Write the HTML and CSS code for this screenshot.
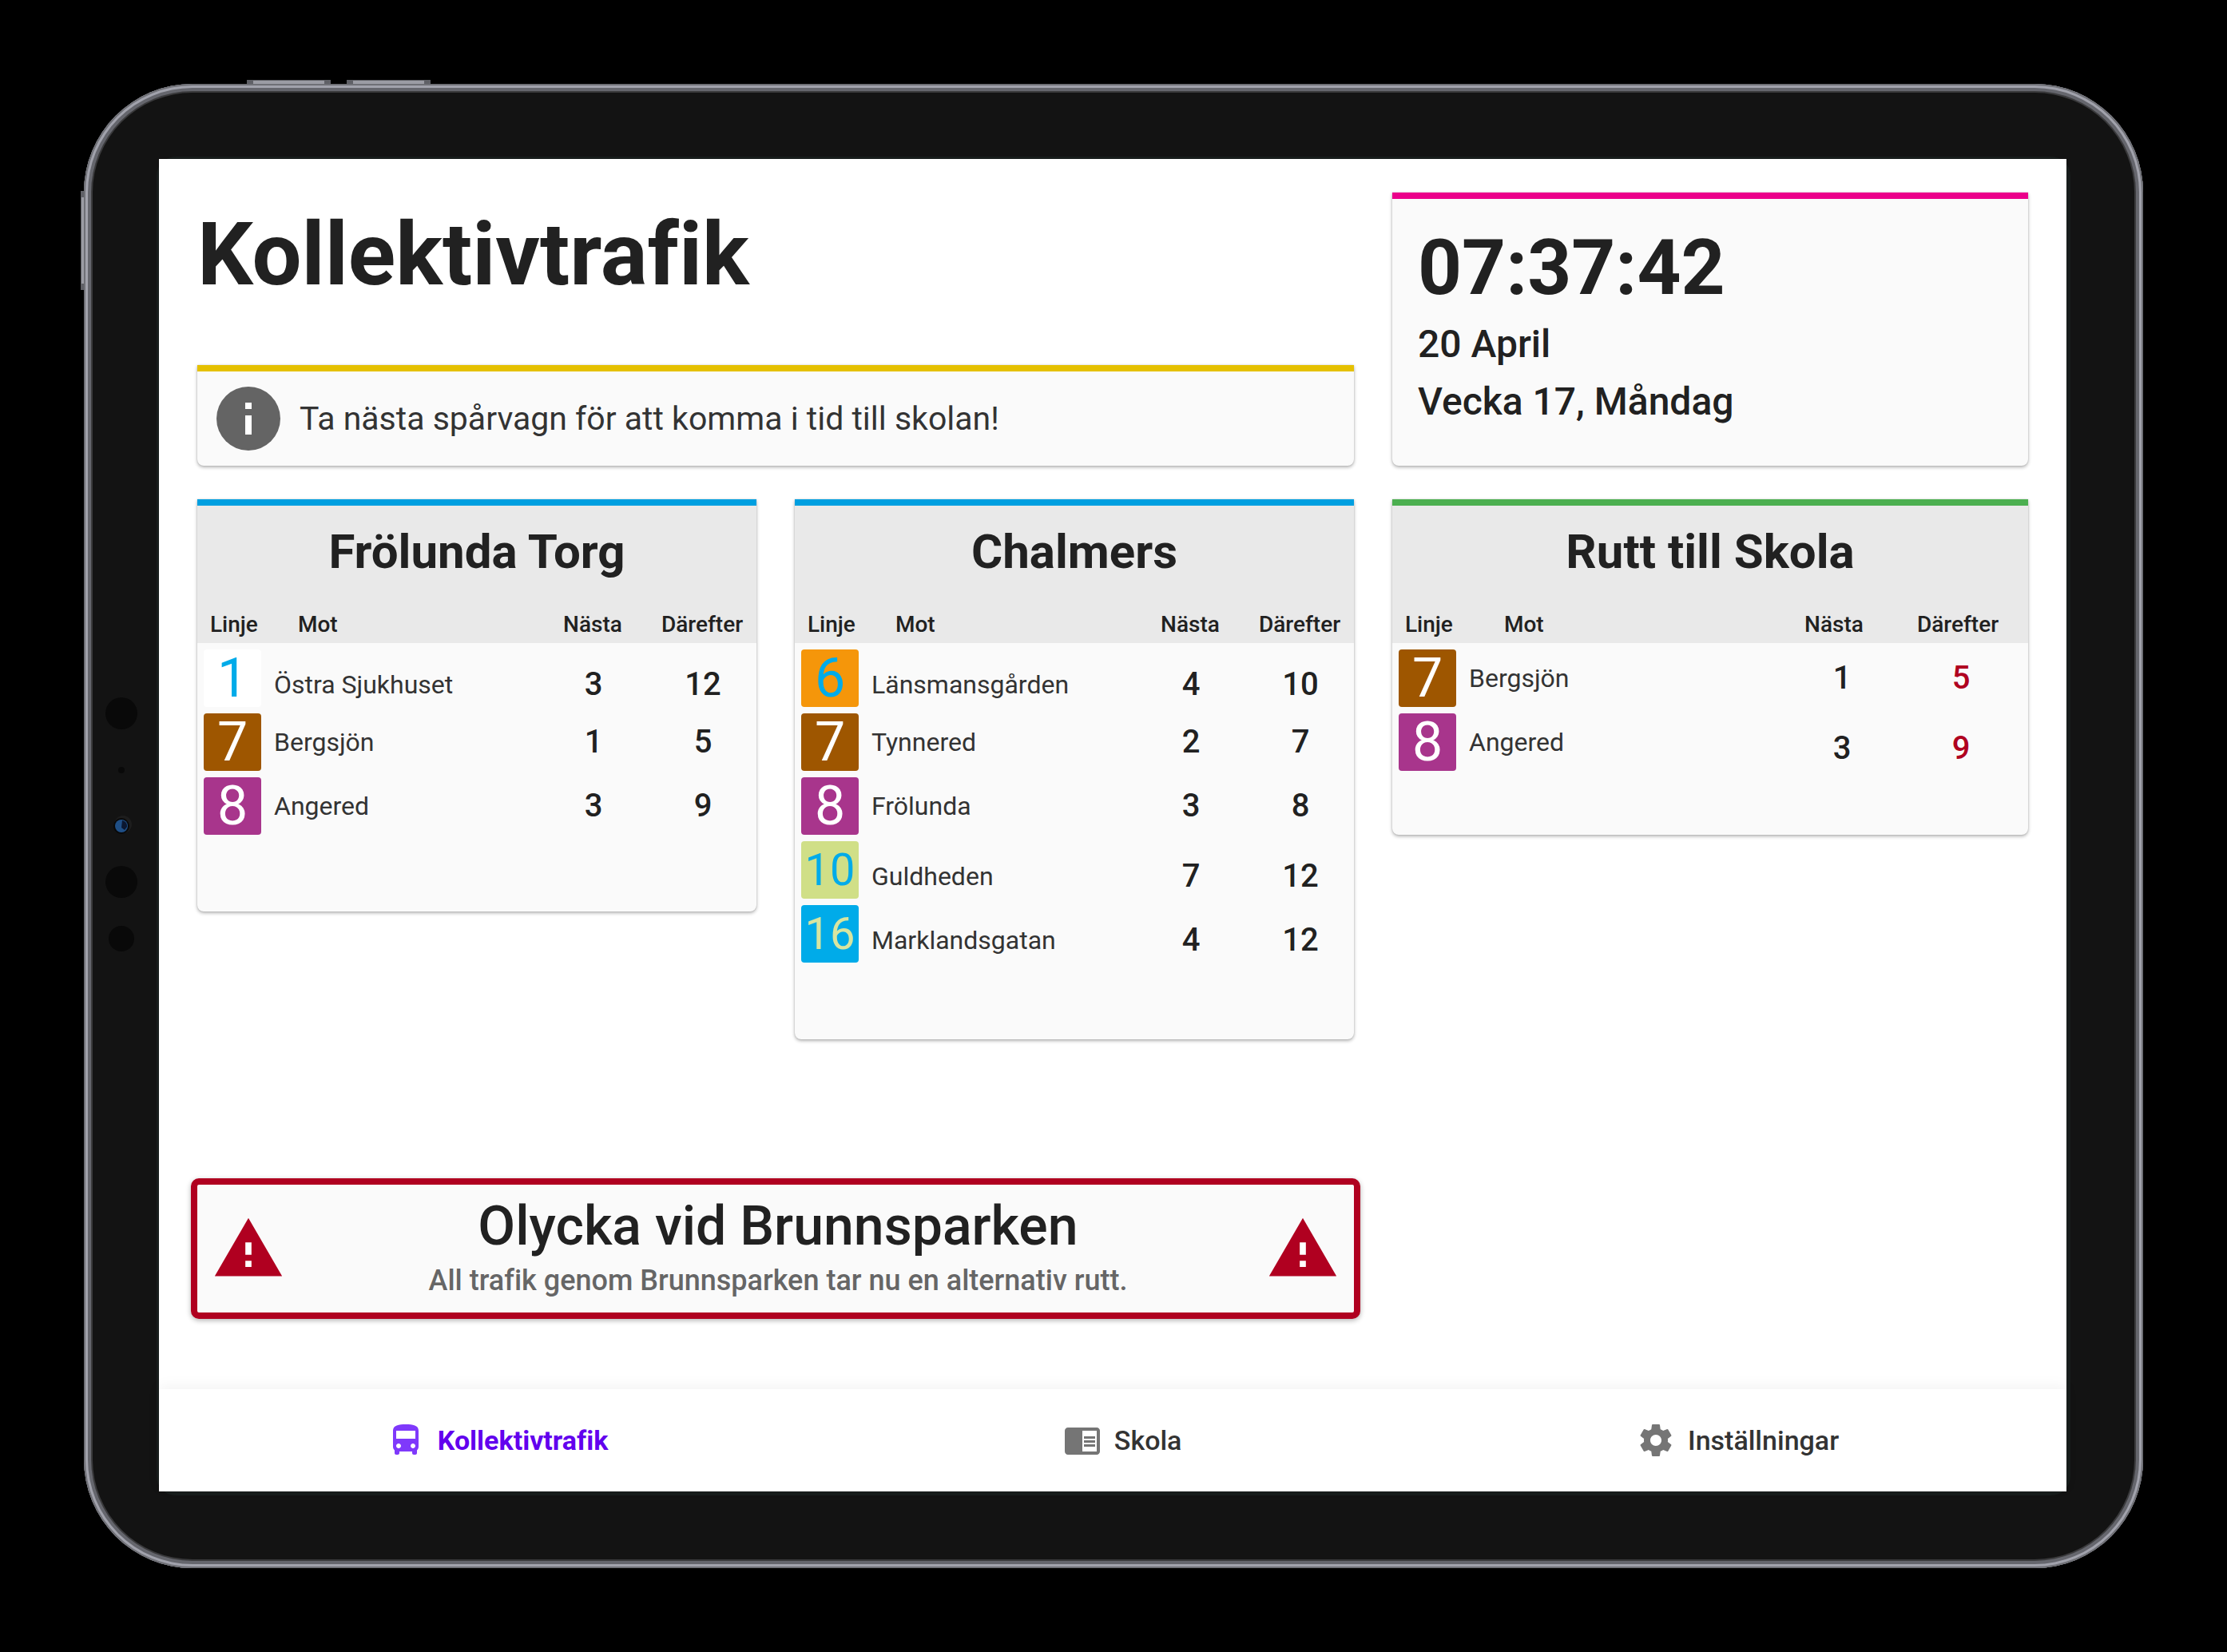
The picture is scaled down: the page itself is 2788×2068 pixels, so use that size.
FILE: index.html
```html
<!DOCTYPE html>
<html lang="sv">
<head>
<meta charset="utf-8">
<meta name="viewport" content="width=device-width, initial-scale=1">
<title>Kollektivtrafik</title>
<link rel="stylesheet" href="styles.css">
</head>
<body>
<div class="device">
  <span class="key key-top-first"></span>
  <span class="key key-top-second"></span>
  <span class="key key-side"></span>
  <svg class="sensors" viewBox="0 0 48 330" aria-hidden="true">
    <circle cx="24" cy="24" r="20" fill="#090909"/>
    <circle cx="24" cy="95" r="4" fill="#090909"/>
    <circle cx="26" cy="163" r="11" fill="#1d1d1d"/>
    <circle cx="24" cy="165" r="10" fill="#090909"/>
    <circle cx="24" cy="165" r="8" fill="#1f4f86"/>
    <path d="M25 158a7 7 0 0 1 6 8l-3 4-4-3z" fill="#0b1730"/>
    <circle cx="24" cy="235" r="20" fill="#090909"/>
    <circle cx="24" cy="306" r="16" fill="#090909"/>
  </svg>
  <div class="glass">
    <div class="screen">
      <main class="content">
        <div class="grid">
          <header class="intro">
            <h1 class="page-title">Kollektivtrafik</h1>
            <section class="card card-yellow info">
              <svg class="info-icon" viewBox="0 0 24 24" aria-hidden="true"><circle cx="12" cy="12" r="10" fill="#646464"/><path fill="#fff" d="M11 11h2v6h-2zM11 7h2v2h-2z"/></svg>
              <p class="info-text">Ta nästa spårvagn för att komma i tid till skolan!</p>
            </section>
          </header>
          <section class="card card-pink clock">
            <time class="clock-time">07:37:42</time>
            <p class="clock-date">20 April</p>
            <p class="clock-date">Vecka 17, Måndag</p>
          </section>

          <section class="card card-blue">
            <h2 class="card-title">Frölunda Torg</h2>
            <table class="lines">
              <colgroup><col class="col-line"><col><col class="col-next"><col class="col-after"></colgroup>
              <thead><tr><th class="head-line">Linje</th><th class="head-to">Mot</th><th>Nästa</th><th>Därefter</th></tr></thead>
              <tbody>
                <tr><td class="cell-badge"><span class="badge line-1">1</span></td><td class="name low">Östra Sjukhuset</td><td class="time low">3</td><td class="time low">12</td></tr>
                <tr><td class="cell-badge"><span class="badge line-7">7</span></td><td class="name">Bergsjön</td><td class="time">1</td><td class="time">5</td></tr>
                <tr><td class="cell-badge"><span class="badge line-8">8</span></td><td class="name">Angered</td><td class="time">3</td><td class="time">9</td></tr>
              </tbody>
            </table>
          </section>

          <section class="card card-blue">
            <h2 class="card-title">Chalmers</h2>
            <table class="lines">
              <colgroup><col class="col-line"><col><col class="col-next"><col class="col-after"></colgroup>
              <thead><tr><th class="head-line">Linje</th><th class="head-to">Mot</th><th>Nästa</th><th>Därefter</th></tr></thead>
              <tbody>
                <tr><td class="cell-badge"><span class="badge line-6">6</span></td><td class="name low">Länsmansgården</td><td class="time low">4</td><td class="time low">10</td></tr>
                <tr><td class="cell-badge"><span class="badge line-7">7</span></td><td class="name">Tynnered</td><td class="time">2</td><td class="time">7</td></tr>
                <tr><td class="cell-badge"><span class="badge line-8">8</span></td><td class="name">Frölunda</td><td class="time">3</td><td class="time">8</td></tr>
                <tr><td class="cell-badge"><span class="badge line-10">10</span></td><td class="name low">Guldheden</td><td class="time low">7</td><td class="time low">12</td></tr>
                <tr><td class="cell-badge"><span class="badge line-16">16</span></td><td class="name low">Marklandsgatan</td><td class="time low">4</td><td class="time low">12</td></tr>
              </tbody>
            </table>
          </section>

          <section class="card card-green route">
            <h2 class="card-title">Rutt till Skola</h2>
            <table class="lines">
              <colgroup><col class="col-line"><col><col class="col-next"><col class="col-after"></colgroup>
              <thead><tr><th class="head-line">Linje</th><th class="head-to">Mot</th><th>Nästa</th><th>Därefter</th></tr></thead>
              <tbody>
                <tr><td class="cell-badge"><span class="badge line-7">7</span></td><td class="name">Bergsjön</td><td class="time">1</td><td class="time late">5</td></tr>
                <tr><td class="cell-badge"><span class="badge line-8">8</span></td><td class="name">Angered</td><td class="time low">3</td><td class="time low late">9</td></tr>
              </tbody>
            </table>
          </section>
        </div>

        <div class="grid alert-row">
          <section class="alert" role="alert">
            <svg class="alert-icon" viewBox="0 0 24 24" aria-hidden="true"><path fill="#fff" d="M10 9h4v10h-4z"/><path fill="#b00020" d="M1 21h22L12 2 1 21zm12-3h-2v-2h2v2zm0-4h-2v-4h2v4z"/></svg>
            <div class="alert-body">
              <h2 class="alert-title">Olycka vid Brunnsparken</h2>
              <p class="alert-text">All trafik genom Brunnsparken tar nu en alternativ rutt.</p>
            </div>
            <svg class="alert-icon" viewBox="0 0 24 24" aria-hidden="true"><path fill="#fff" d="M10 9h4v10h-4z"/><path fill="#b00020" d="M1 21h22L12 2 1 21zm12-3h-2v-2h2v2zm0-4h-2v-4h2v4z"/></svg>
          </section>
        </div>
      </main>

      <nav class="tabs">
        <a class="tab tab-active" href="#kollektivtrafik">
          <svg class="tab-icon" viewBox="0 0 24 24" aria-hidden="true"><path d="M4 16c0 .88.39 1.67 1 2.22V20c0 .55.45 1 1 1h1c.55 0 1-.45 1-1v-1h8v1c0 .55.45 1 1 1h1c.55 0 1-.45 1-1v-1.78c.61-.55 1-1.34 1-2.22V6c0-3.5-3.58-4-8-4s-8 .5-8 4v10zm3.5 1c-.83 0-1.5-.67-1.5-1.5S6.67 14 7.5 14s1.5.67 1.5 1.5S8.33 17 7.5 17zm9 0c-.83 0-1.5-.67-1.5-1.5s.67-1.5 1.5-1.5 1.5.67 1.5 1.5-.67 1.5-1.5 1.5zm1.5-6H6V6h12v5z"/></svg>
          Kollektivtrafik
        </a>
        <a class="tab" href="#skola">
          <svg class="tab-icon" viewBox="0 0 24 24" aria-hidden="true"><path d="M13 12h7v1.5h-7zm0-2.5h7V11h-7zm0 5h7V16h-7zM21 4H3c-1.1 0-2 .9-2 2v13c0 1.1.9 2 2 2h18c1.1 0 2-.9 2-2V6c0-1.1-.9-2-2-2zm0 15h-9V6h9v13z"/></svg>
          Skola
        </a>
        <a class="tab" href="#installningar">
          <svg class="tab-icon" viewBox="0 0 24 24" aria-hidden="true"><path d="M19.43 12.98c.04-.32.07-.64.07-.98s-.03-.66-.07-.98l2.11-1.65c.19-.15.24-.42.12-.64l-2-3.46c-.12-.22-.39-.3-.61-.22l-2.49 1c-.52-.4-1.08-.73-1.69-.98l-.38-2.65C14.46 2.18 14.25 2 14 2h-4c-.25 0-.46.18-.49.42l-.38 2.65c-.61.25-1.17.59-1.69.98l-2.49-1c-.23-.09-.49 0-.61.22l-2 3.46c-.13.22-.07.49.12.64l2.11 1.65c-.04.32-.07.65-.07.98s.03.66.07.98l-2.11 1.65c-.19.15-.24.42-.12.64l2 3.46c.12.22.39.3.61.22l2.49-1c.52.4 1.08.73 1.69.98l.38 2.65c.03.24.24.42.49.42h4c.25 0 .46-.18.49-.42l.38-2.65c.61-.25 1.17-.59 1.69-.98l2.49 1c.23.09.49 0 .61-.22l2-3.46c.12-.22.07-.49-.12-.64l-2.11-1.65zM12 15.5c-1.93 0-3.5-1.57-3.5-3.5s1.57-3.5 3.5-3.5 3.5 1.57 3.5 3.5-1.57 3.5-3.5 3.5z"/></svg>
          Inställningar
        </a>
      </nav>
    </div>
  </div>
</div>
</body>
</html>
```

FILE: styles.css
```css
* {
  box-sizing: border-box;
}

body {
  margin: 0;
  min-height: 100vh;
  padding: 105px;
  display: flex;
  background: #000;
  color: #212121;
  font-family: Roboto, "Noto Sans", sans-serif;
  font-variant-ligatures: none;
}

h1, h2, p {
  margin: 0;
}

/* Tablet frame */
.device {
  position: relative;
  flex: 1;
  display: flex;
  padding: 91px;
  border-radius: 136px;
  background: #131313;
  box-shadow:
    inset 0 0 0 2px #6f7076,
    inset 0 0 0 5px #a1a2ac,
    inset 0 0 0 9px #65666d,
    inset 0 0 0 11px #3a3a3c;
}

.key {
  position: absolute;
  background: #9b9ca4;
  border: 0 solid #5f6066;
}

.key-top-first,
.key-top-second {
  top: -5px;
  width: 105px;
  height: 5px;
  border-width: 1px 8px 0;
}

.key-top-first {
  left: 204px;
}

.key-top-second {
  left: 329px;
}

.key-side {
  left: -4px;
  top: 134px;
  width: 4px;
  height: 124px;
  border-width: 8px 0 8px 1px;
}

.sensors {
  position: absolute;
  left: 23px;
  top: 50%;
  width: 48px;
  height: 330px;
  margin-top: -165px;
}

.glass {
  flex: 1;
  display: flex;
  padding: 3px 5px 5px 3px;
  border-radius: 24px;
  background: #181d1c;
}

.screen {
  flex: 1;
  display: flex;
  flex-direction: column;
  background: #fff;
}

.content {
  flex: 1;
  display: flex;
  flex-direction: column;
  padding: 42px 48px 88px;
}

.grid {
  display: grid;
  grid-template-columns: 700fr 700fr 796fr;
  gap: 42px 48px;
  align-items: start;
}

/* Cards */
.card {
  border-top: 8px solid;
  border-radius: 0 0 8px 8px;
  background: #fafafa;
  box-shadow: 0 2px 4px rgba(0, 0, 0, .3), 0 0 2px rgba(0, 0, 0, .16);
}

.card-yellow { border-color: #e5c000; }
.card-pink { border-color: #eb008b; }
.card-blue { border-color: #009fe0; }
.card-green { border-color: #4caf50; }

.intro {
  grid-column: span 2;
  align-self: stretch;
  display: flex;
  flex-direction: column;
  justify-content: space-between;
}

.page-title {
  padding-top: 12px;
  font-size: 110px;
  line-height: 132px;
  font-weight: 700;
}

.info {
  display: flex;
  align-items: center;
  gap: 16px;
  padding: 11px 16px;
}

.info-icon {
  width: 96px;
  height: 96px;
}

.info-text {
  font-size: 41px;
  line-height: 48px;
  color: #333;
}

.clock {
  padding: 26px 32px 44px;
}

.clock-time {
  display: block;
  font-size: 96px;
  line-height: 120px;
  font-weight: 700;
}

.clock-date {
  font-size: 48px;
  line-height: 72px;
  font-weight: 500;
}

.card-title {
  padding: 22px 0 32px;
  background: #e9e9e9;
  font-size: 60px;
  line-height: 72px;
  font-weight: 700;
  text-align: center;
}

/* Departures */
.lines {
  width: 100%;
  margin-bottom: 96px;
  table-layout: fixed;
  border-collapse: collapse;
}

.route .lines { margin-bottom: 80px; }

.col-line { width: 96px; }
.col-next { width: 138px; }
.col-after { width: 136px; }
.route .col-next { width: 134px; }
.route .col-after { width: 176px; }

.lines th {
  height: 46px;
  padding: 0;
  background: #e9e9e9;
  font-size: 28px;
  line-height: 40px;
  font-weight: 500;
  text-align: center;
}

.lines .head-line {
  padding-left: 16px;
  text-align: left;
}

.lines .head-to {
  padding-left: 30px;
  text-align: left;
}

.route .head-to { padding-left: 44px; }

.lines td {
  height: 80px;
  padding: 8px 0 0;
  line-height: 48px;
}

.lines .low { padding-top: 24px; }
.lines .cell-badge { padding-left: 8px; }

.badge {
  display: block;
  width: 72px;
  height: 72px;
  border-radius: 4px;
  font-size: 68px;
  line-height: 72px;
  text-align: center;
}

.line-1 { background: #fff; color: #00abe9; }
.line-6 { background: #f5960a; color: #00abe9; }
.line-7 { background: #9e5600; color: #fff; }
.line-8 { background: #a8358c; color: #fff; }
.line-10 { background: #d0df87; color: #00abe9; font-size: 56px; }
.line-16 { background: #00abe9; color: #d8e5a0; font-size: 56px; }

.name {
  font-size: 32px;
  color: #333;
}

.time {
  font-size: 40px;
  font-weight: 500;
  text-align: center;
}

.lines .time { padding-left: 2px; }
.route .lines .time { padding-left: 20px; }
.route .lines .late { padding-left: 8px; color: #b00020; }

/* Alert */
.alert-row { margin-top: auto; }

.alert {
  grid-column: span 2;
  display: flex;
  align-items: center;
  margin: 0 -8px;
  padding: 12px 18px;
  border: 8px solid #b00020;
  border-radius: 10px;
  background: #fafafa;
  box-shadow: 0 2px 6px rgba(0, 0, 0, .3);
}

.alert-icon {
  width: 92px;
  height: 92px;
}

.alert-body {
  flex: 1;
  padding-left: 6px;
  text-align: center;
}

.alert-title {
  font-size: 68px;
  line-height: 80px;
  font-weight: 500;
}

.alert-text {
  font-size: 36px;
  line-height: 56px;
  font-weight: 500;
  color: #666;
}

/* Bottom navigation */
.tabs {
  display: flex;
  justify-content: space-around;
  align-items: center;
  height: 128px;
  box-shadow: 0 -4px 16px rgba(0, 0, 0, .05);
}

.tab {
  display: flex;
  align-items: center;
  gap: 16px;
  color: #333;
  font-size: 34px;
  line-height: 48px;
  font-weight: 500;
  text-decoration: none;
}

.tab-icon {
  width: 48px;
  height: 48px;
  fill: #757575;
}

.tab-active {
  color: #6200ee;
  font-weight: 700;
}

.tab-active .tab-icon { fill: #7f39fb; }
```
